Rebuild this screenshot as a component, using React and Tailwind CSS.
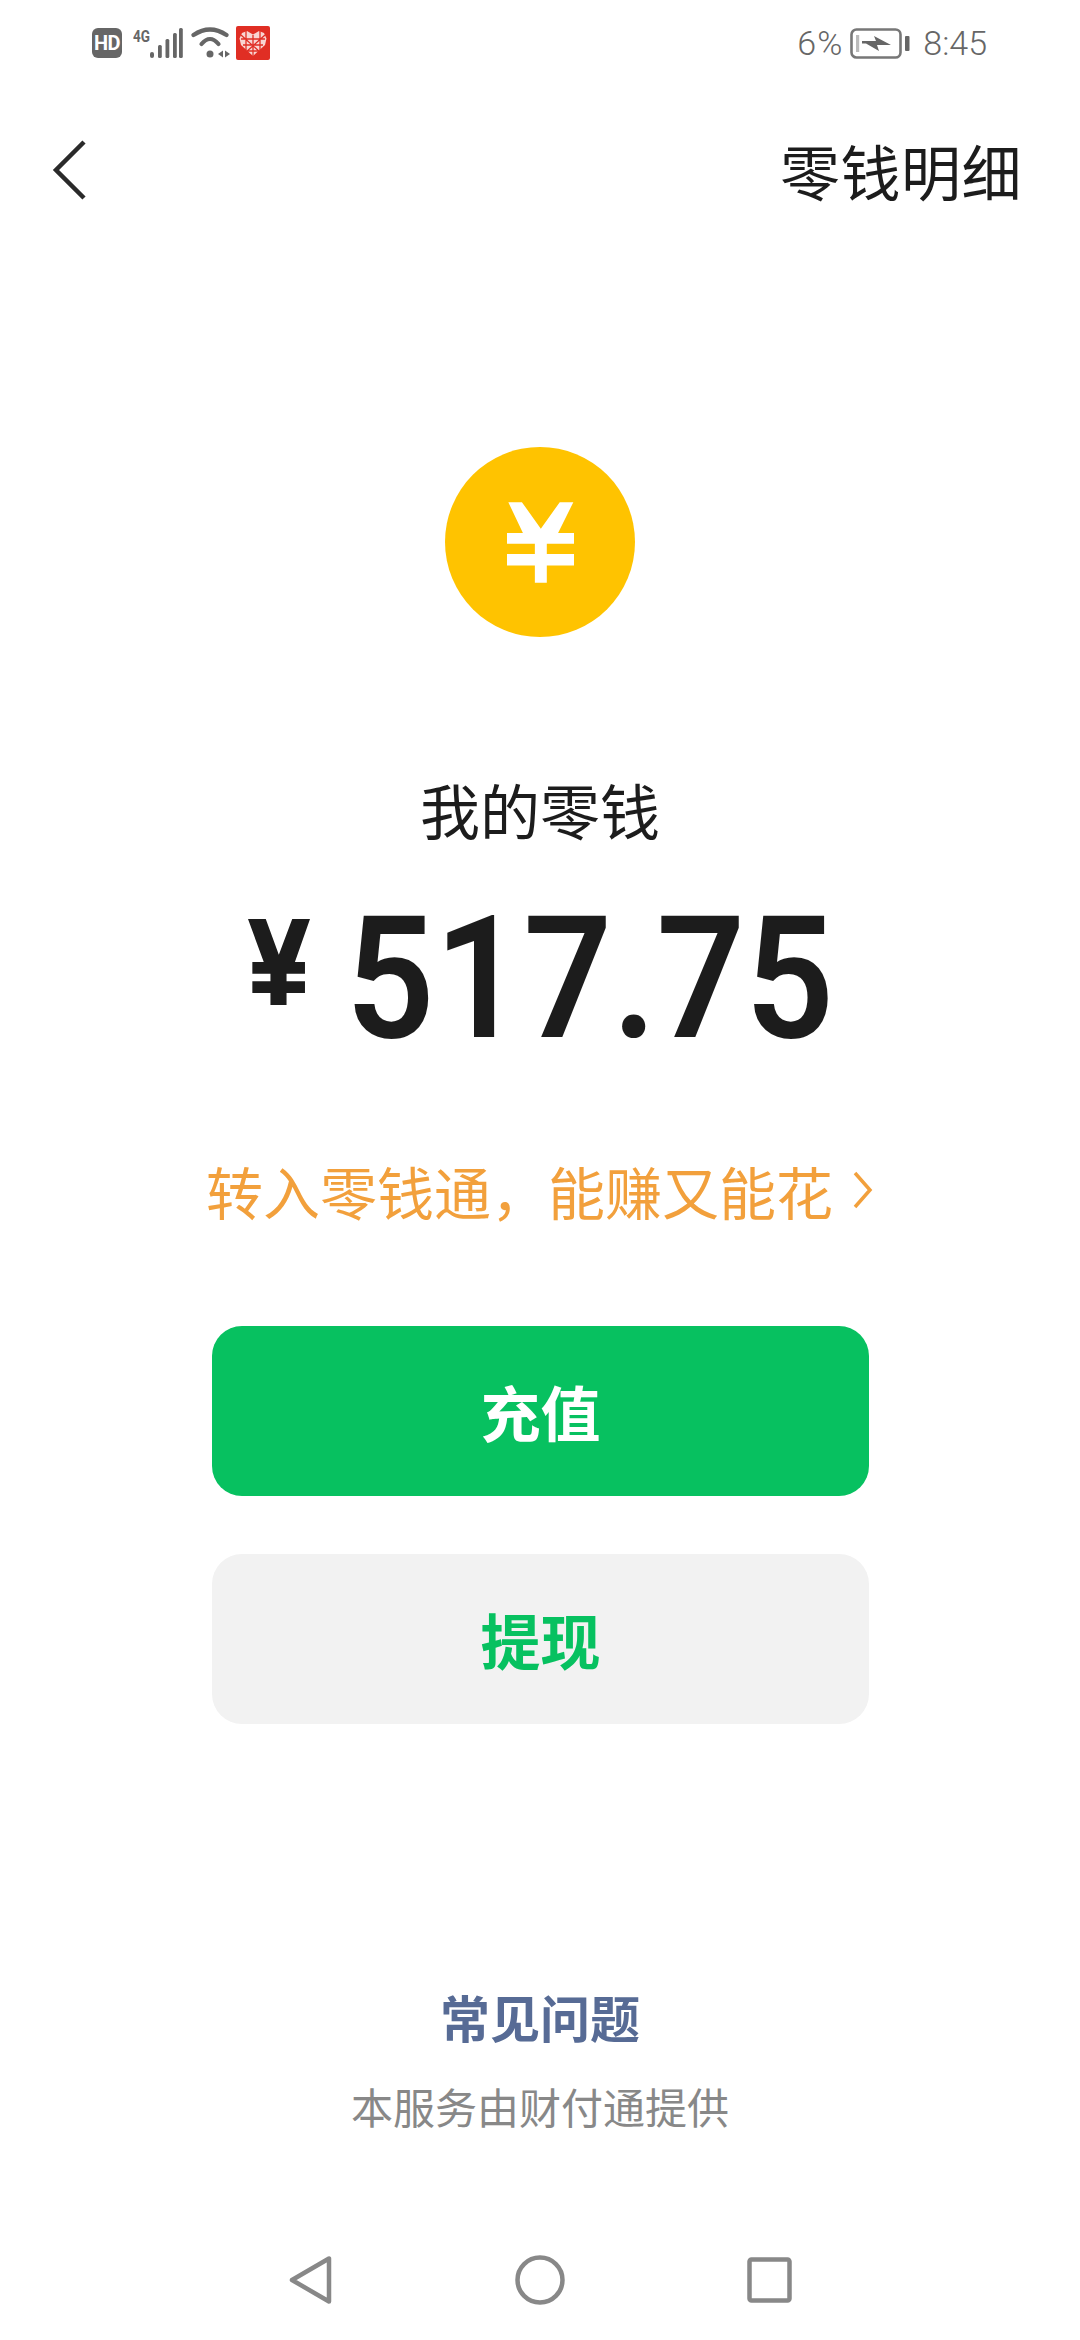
const cjk = { fontFamily: '"Noto Sans CJK SC", "Noto Sans", sans-serif' };

function StatusLeft() {
  return (
    <div className="flex items-center">
      <div className="w-[30px] h-[30px] rounded-[6px] bg-[#666] flex items-center justify-center text-white text-[20px] font-bold leading-none font-['Roboto',sans-serif] tracking-[-0.5px]">
        HD
      </div>
      <svg width="50" height="32" viewBox="0 0 50 32" className="ml-[11px]" fill="#666">
        <text x="0" y="15" fontFamily="Roboto, sans-serif" fontWeight="700" fontSize="17" textLength="17" lengthAdjust="spacingAndGlyphs">4G</text>
        <rect x="17" y="25" width="4" height="6" rx="2" />
        <rect x="25" y="18" width="3.800" height="13" rx="1.500" />
        <rect x="32.500" y="12" width="3.800" height="19" rx="1.500" />
        <rect x="40" y="6" width="3.800" height="25" rx="1.500" />
        <rect x="46" y="1" width="3.800" height="30" rx="1.500" />
      </svg>
      <svg width="42" height="32" viewBox="0 0 42 32" className="ml-[7px]" fill="none" stroke="#666" strokeWidth="4.200" strokeLinecap="round">
        <path d="M3.500 8Q20 -3 36.500 8" />
        <path d="M11.500 17Q20 7 28.500 17" />
        <circle cx="20" cy="27" r="3.500" fill="#666" stroke="none" />
        <path d="M33 23.500v7l-5-3.500z" fill="#666" stroke="none" />
        <path d="M35 23.500v7l5-3.500z" fill="#666" stroke="none" />
      </svg>
      <svg width="34" height="34" viewBox="0 0 34 34" className="ml-[4px]">
        <rect width="34" height="34" rx="2" fill="#e02e24" />
        <path d="M17 30L5 19L3.500 12.500L6 7L11 5L17 8.500L23 5L28 7L30.500 12.500L29 19Z" fill="#f8d5d2" />
        <path d="M5 13H29M7 19H27M11 25H23M10 5V24M17 9V30M24 5V24M5 9L25 27M29 9L9 27" stroke="#e02e24" strokeWidth="1.300" fill="none" />
      </svg>
    </div>
  );
}

function StatusRight() {
  return (
    <div className="flex items-center text-[#666] font-['Roboto',sans-serif] text-[34px] leading-none font-light">
      <span className="tracking-[1px]">6%</span>
      <svg width="60" height="31" viewBox="0 0 60 31" className="ml-[7px]" fill="none">
        <rect x="1.500" y="1.500" width="49" height="28" rx="5" stroke="#777" strokeWidth="2.600" />
        <rect x="6" y="7" width="3.200" height="17" fill="#bbb" />
        <path d="M12 13L26 13L24 8L41 17L27 17L29 23L16 15.500L12 15.500Z" fill="#666" />
        <rect x="55" y="8" width="4.500" height="15" rx="1" fill="#666" />
      </svg>
      <span className="ml-[13px]">8:45</span>
    </div>
  );
}

function NavBar() {
  return (
    <div className="flex items-center justify-center gap-[182px] h-[50px]">
      <svg width="44" height="50" viewBox="0 0 44 50" fill="none" stroke="#888" strokeWidth="4.500" strokeLinejoin="round">
        <path d="M40 3.500L40 46.500L3 25Z" />
      </svg>
      <svg width="50" height="50" viewBox="0 0 50 50" fill="none" stroke="#888" strokeWidth="4.500">
        <circle cx="25" cy="25" r="22.500" />
      </svg>
      <svg width="45" height="46" viewBox="0 0 45 46" fill="none" stroke="#888" strokeWidth="4.500" strokeLinejoin="round">
        <rect x="2.500" y="2.500" width="40" height="41" rx="2" />
      </svg>
    </div>
  );
}

export default function App() {
  return (
    <div className="w-[1080px] h-[2340px] bg-white flex flex-col overflow-hidden" style={cjk}>
      <div className="flex items-center justify-between h-[44px] mt-[21px] pl-[92px] pr-[93px] shrink-0">
        <StatusLeft />
        <StatusRight />
      </div>

      <div className="flex items-center justify-between pl-[51px] pr-[58px] mt-[70px] h-[70px] shrink-0">
        <svg width="38" height="64" viewBox="0 0 38 64" fill="none" stroke="#2a2a2a" strokeWidth="4.500" strokeLinejoin="miter">
          <path d="M33 4L5 32L33 60" />
        </svg>
        <h1 className="text-[60px] tracking-[0.5px] leading-none font-normal text-[#1c1c1c]">零钱明细</h1>
      </div>

      <div className="flex flex-col items-center mt-[242px]">
        <div className="w-[190px] h-[190px] rounded-full bg-[#ffc300] flex items-center justify-center">
          <svg width="67" height="81" viewBox="0 0 202 243" fill="white">
            <path d="M4 0H45L102 80L159 0H200L154 93H202V125H120V156H202V191H120V243H84V191H0V156H84V125H0V93H48Z" />
          </svg>
        </div>

        <div className="mt-[142px] text-[60px] leading-[60px] text-[#1c1c1c]">我的零钱</div>

        <div className="flex items-start mt-[78px] h-[125px] text-[#1c1c1c]">
          <svg width="62" height="86" viewBox="0 0 185 258" preserveAspectRatio="none" fill="#1c1c1c" className="mt-[2px]">
            <path d="M0 0H53L92 107L132 0H185L140 129H170V164H115V187H170V222H115V258H67V222H13V187H67V164H13V129H47Z" />
          </svg>
          <div className="ml-[38px] w-[484px] flex justify-center">
            <span className="text-[170px] leading-[125px] font-semibold font-['Roboto',sans-serif] scale-x-[0.915] whitespace-nowrap">
              517.75
            </span>
          </div>
        </div>

        <div className="flex items-center mt-[118px] text-[#f2a03c] h-[60px]">
          <span className="text-[57px] leading-none">转入零钱通，能赚又能花</span>
          <svg width="22" height="42" viewBox="0 0 22 42" fill="none" stroke="#f2a03c" strokeWidth="3.500" className="ml-[19px]">
            <path d="M3 4L18 21L3 38" />
          </svg>
        </div>

        <button className="mt-[106px] ml-[1px] w-[657px] h-[170px] rounded-[30px] bg-[#07c160] text-white text-[60px] font-bold">
          充值
        </button>
        <button className="mt-[58px] ml-[1px] w-[657px] h-[170px] rounded-[30px] bg-[#f2f2f2] text-[#07c160] text-[60px] font-bold">
          提现
        </button>

        <div className="mt-[264px] text-[50px] leading-[56px] font-bold text-[#576b95]">常见问题</div>
        <div className="mt-[34px] text-[42px] leading-[56px] text-[#888]">本服务由财付通提供</div>
      </div>

      <div className="mt-auto mb-[35px]">
        <NavBar />
      </div>
    </div>
  );
}
